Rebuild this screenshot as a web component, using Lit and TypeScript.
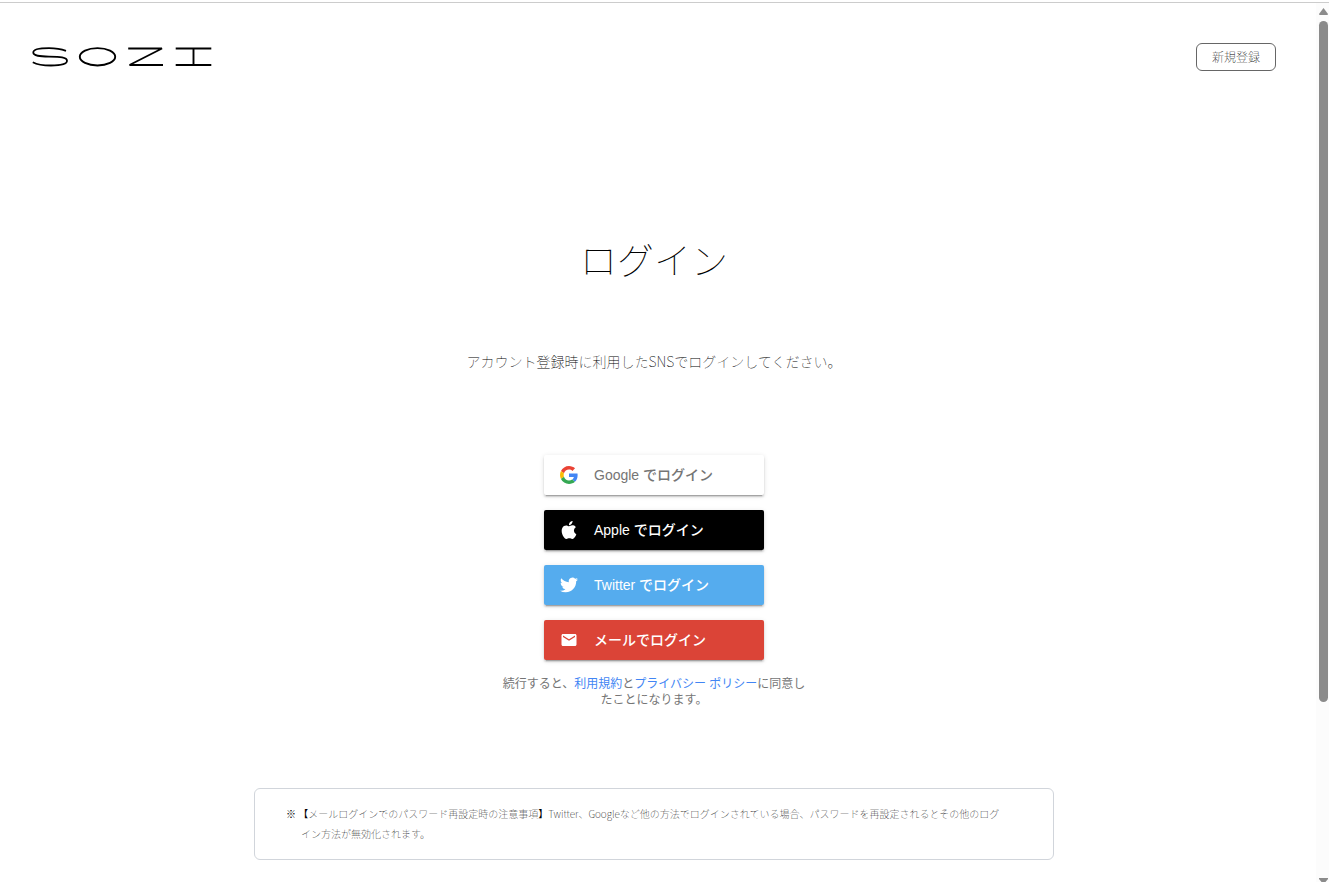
import { LitElement, html, css, svg } from "lit";
import { customElement } from "lit/decorators.js";

const googleIcon = svg`<svg class="icon" viewBox="0 0 48 48" aria-hidden="true">
  <path fill="#EA4335" d="M24 9.5c3.54 0 6.71 1.22 9.21 3.6l6.85-6.85C35.9 2.38 30.47 0 24 0 14.62 0 6.51 5.38 2.56 13.22l7.98 6.19C12.43 13.72 17.74 9.5 24 9.5z"/>
  <path fill="#4285F4" d="M46.98 24.55c0-1.57-.15-3.09-.38-4.55H24v9.02h12.94c-.58 2.96-2.26 5.48-4.78 7.18l7.73 6c4.51-4.18 7.09-10.36 7.09-17.65z"/>
  <path fill="#FBBC05" d="M10.53 28.59c-.48-1.45-.76-2.99-.76-4.59s.27-3.14.76-4.59l-7.98-6.19C.92 16.46 0 20.12 0 24c0 3.88.92 7.54 2.56 10.78l7.97-6.19z"/>
  <path fill="#34A853" d="M24 48c6.48 0 11.93-2.13 15.89-5.81l-7.73-6c-2.15 1.45-4.92 2.3-8.16 2.3-6.26 0-11.57-4.22-13.47-9.91l-7.98 6.19C6.51 42.62 14.62 48 24 48z"/>
</svg>`;

const appleIcon = svg`<svg class="icon" viewBox="0 0 24 24" aria-hidden="true">
  <path fill="#fff" d="M12.15 6.9c-.95 0-2.41-1.08-3.96-1.04-2.04.03-3.91 1.18-4.96 3.01-2.12 3.68-.55 9.1 1.52 12.09 1.01 1.45 2.21 3.09 3.79 3.04 1.52-.07 2.09-.99 3.93-.99 1.83 0 2.35.99 3.96.95 1.64-.03 2.68-1.48 3.68-2.95 1.16-1.69 1.64-3.33 1.66-3.42-.04-.01-3.18-1.22-3.22-4.86-.03-3.04 2.48-4.49 2.6-4.56-1.43-2.09-3.62-2.32-4.39-2.38-2-.16-3.68 1.09-4.61 1.11zM15.53 3.83c.84-1.01 1.4-2.43 1.25-3.83-1.21.05-2.66.8-3.53 1.82-.78.9-1.45 2.34-1.27 3.71 1.34.1 2.71-.69 3.55-1.7"/>
</svg>`;

const twitterIcon = svg`<svg class="icon" viewBox="0 0 24 24" aria-hidden="true">
  <path fill="#fff" d="M23.95 4.57a10 10 0 0 1-2.82.77 4.96 4.96 0 0 0 2.16-2.72c-.95.55-2 .95-3.13 1.18a4.92 4.92 0 0 0-8.38 4.48C7.69 8.09 4.07 6.13 1.64 3.16a4.82 4.82 0 0 0-.67 2.48c0 1.71.87 3.21 2.19 4.1a4.9 4.9 0 0 1-2.23-.62v.06a4.92 4.92 0 0 0 3.95 4.83 5 5 0 0 1-2.21.08 4.94 4.94 0 0 0 4.6 3.42A9.87 9.87 0 0 1 0 19.54a13.99 13.99 0 0 0 7.56 2.21c9.05 0 14-7.5 14-13.98 0-.21 0-.42-.02-.63a9.94 9.94 0 0 0 2.41-2.57z"/>
</svg>`;

const mailIcon = svg`<svg class="icon" viewBox="0 0 24 24" aria-hidden="true">
  <path fill="#fff" d="M20 4H4c-1.1 0-2 .9-2 2v12c0 1.1.9 2 2 2h16c1.1 0 2-.9 2-2V6c0-1.1-.9-2-2-2zm0 4l-8 5-8-5V6l8 5 8-5v2z"/>
</svg>`;

const providers = [
  { id: "google", label: "Google でログイン", icon: googleIcon },
  { id: "apple", label: "Apple でログイン", icon: appleIcon },
  { id: "twitter", label: "Twitter でログイン", icon: twitterIcon },
  { id: "mail", label: "メールでログイン", icon: mailIcon },
];

@customElement("app-root")
export class AppRoot extends LitElement {
  static styles = css`
    :host {
      display: flex;
      box-sizing: border-box;
      min-height: 100vh;
      padding-top: 2px;
      background: #fff;
      color: #000;
      font-family: "Noto Sans CJK JP", sans-serif;
      font-weight: 100;
    }
    * {
      box-sizing: border-box;
    }
    .page {
      flex: 1;
      min-width: 0;
      border-top: 1px solid #ccc;
    }
    .header {
      display: flex;
      justify-content: space-between;
      align-items: center;
      padding: 40px 40px 0 32px;
    }
    .logo {
      display: block;
      width: 180px;
      height: 20px;
    }
    .signup {
      height: 28px;
      width: 80px;
      padding: 0;
      border: 1px solid #666;
      border-radius: 6px;
      background: #fff;
      color: #000;
      font: inherit;
      font-size: 12px;
      line-height: 24px;
    }
    .content {
      display: flex;
      flex-direction: column;
      align-items: center;
      padding: 0 8px 20px 0;
    }
    .title {
      margin: 160px 0 0;
      font-size: 37px;
      font-weight: 100;
      line-height: 56px;
    }
    .lead {
      margin: 62px 0 0;
      font-size: 14px;
      line-height: 24px;
    }
    .providers {
      display: flex;
      flex-direction: column;
      gap: 15px;
      width: 220px;
      margin: 82px 0 0;
      padding: 0;
      list-style: none;
    }
    .provider {
      display: flex;
      align-items: center;
      gap: 16px;
      width: 100%;
      height: 40px;
      padding: 0 16px;
      border: 0;
      border-radius: 2px;
      box-shadow: 0 2px 2px 0 rgba(0, 0, 0, 0.14),
        0 3px 1px -2px rgba(0, 0, 0, 0.2), 0 1px 5px 0 rgba(0, 0, 0, 0.12);
      color: #fff;
      font-family: "Liberation Sans", "Noto Sans CJK JP", sans-serif;
      font-size: 14px;
      font-weight: 500;
      line-height: 20px;
      text-align: left;
    }
    .google {
      background: #fff;
      color: #757575;
    }
    .apple {
      background: #000;
    }
    .twitter {
      background: #55acee;
    }
    .mail {
      background: #db4437;
    }
    .icon {
      flex: none;
      width: 18px;
      height: 18px;
    }
    .terms {
      width: 312px;
      margin: 16px 0 0;
      color: #757575;
      font-family: "Liberation Sans", "Noto Sans CJK JP", sans-serif;
      font-size: 12px;
      font-weight: 400;
      line-height: 16px;
      text-align: center;
    }
    .terms a {
      color: #4285f4;
      text-decoration: none;
    }
    .notice {
      width: 100%;
      max-width: 800px;
      margin: 80px 0 0;
      padding: 15px 50px 15px 46px;
      border: 1px solid #d1d5db;
      border-radius: 6px;
      font-size: 10px;
      line-height: 20px;
      text-indent: -15px;
    }
    .strong {
      font-weight: 400;
    }
    .scrollbar {
      display: flex;
      flex: none;
      flex-direction: column;
      align-items: flex-end;
      width: 13px;
      height: calc(100vh - 2px);
      padding-right: 1px;
      border-top: 1px solid #ccc;
      background: #fcfcfc;
      overflow: hidden;
    }
    .arrow {
      flex: none;
      display: block;
      width: 9px;
      height: 7px;
      margin: 5px 0;
    }
    .end {
      height: 4px;
      margin: 0;
    }
    .track {
      flex: 1;
      width: 9px;
      padding-top: 1px;
    }
    .thumb {
      width: 9px;
      height: 79.5%;
      border-radius: 5px;
      background: #8b8b8b;
    }
  `;

  render() {
    return html`
      <div class="page">
        <header class="header">
          <svg class="logo" viewBox="0 0 180 20" role="img" aria-label="SOZI" fill="none" stroke="#000">
            <path stroke-width="1.8" d="M34 3.800C29 2 23 1.200 17 1.200C8 1.200 1.300 2.200 1.300 5.500C1.300 9 8 9.400 17 9.600C28 9.800 35 10 35 13.800C35 17.500 27 18.500 19 18.500C11 18.500 5 17.500 .8 15.200" />
            <ellipse stroke-width="1.900" cx="65.500" cy="9.800" rx="17.700" ry="8.700" />
            <path stroke-width="1.800" d="M96.200 1.500H130L97.500 18H131" />
            <path stroke-width="1.900" d="M143.700 1.500H179.300M143.700 18H179.300M161.500 1.500V18" />
          </svg>
          <button class="signup" type="button">新規登録</button>
        </header>
        <main class="content">
          <h1 class="title">ログイン</h1>
          <p class="lead">アカウント登録時に利用したSNSでログインしてください。</p>
          <ul class="providers">
            ${providers.map(
              (p) => html`<li>
                <button class="provider ${p.id}" type="button">${p.icon}<span>${p.label}</span></button>
              </li>`
            )}
          </ul>
          <p class="terms">続行すると、<a href="#terms">利用規約</a>と<a href="#privacy">プライバシー ポリシー</a>に同意したことになります。</p>
          <p class="notice"><span class="strong">※ 【</span>メールログインでのパスワード再設定時の注意事項<span class="strong">】</span>Twitter、Googleなど他の方法でログインされている場合、パスワードを再設定されるとその他のログイン方法が無効化されます。</p>
        </main>
      </div>
      <div class="scrollbar" aria-hidden="true">
        <svg class="arrow" viewBox="0 0 9 7"><path fill="#8b8b8b" d="M4.500 0L9 6Q9 7 8 7H1Q0 7 0 6Z" /></svg>
        <div class="track"><div class="thumb"></div></div>
        <svg class="arrow end" viewBox="0 0 9 4"><path fill="#8b8b8b" d="M0 0H9V1L6.500 4H2.500L0 1Z" /></svg>
      </div>
    `;
  }
}
